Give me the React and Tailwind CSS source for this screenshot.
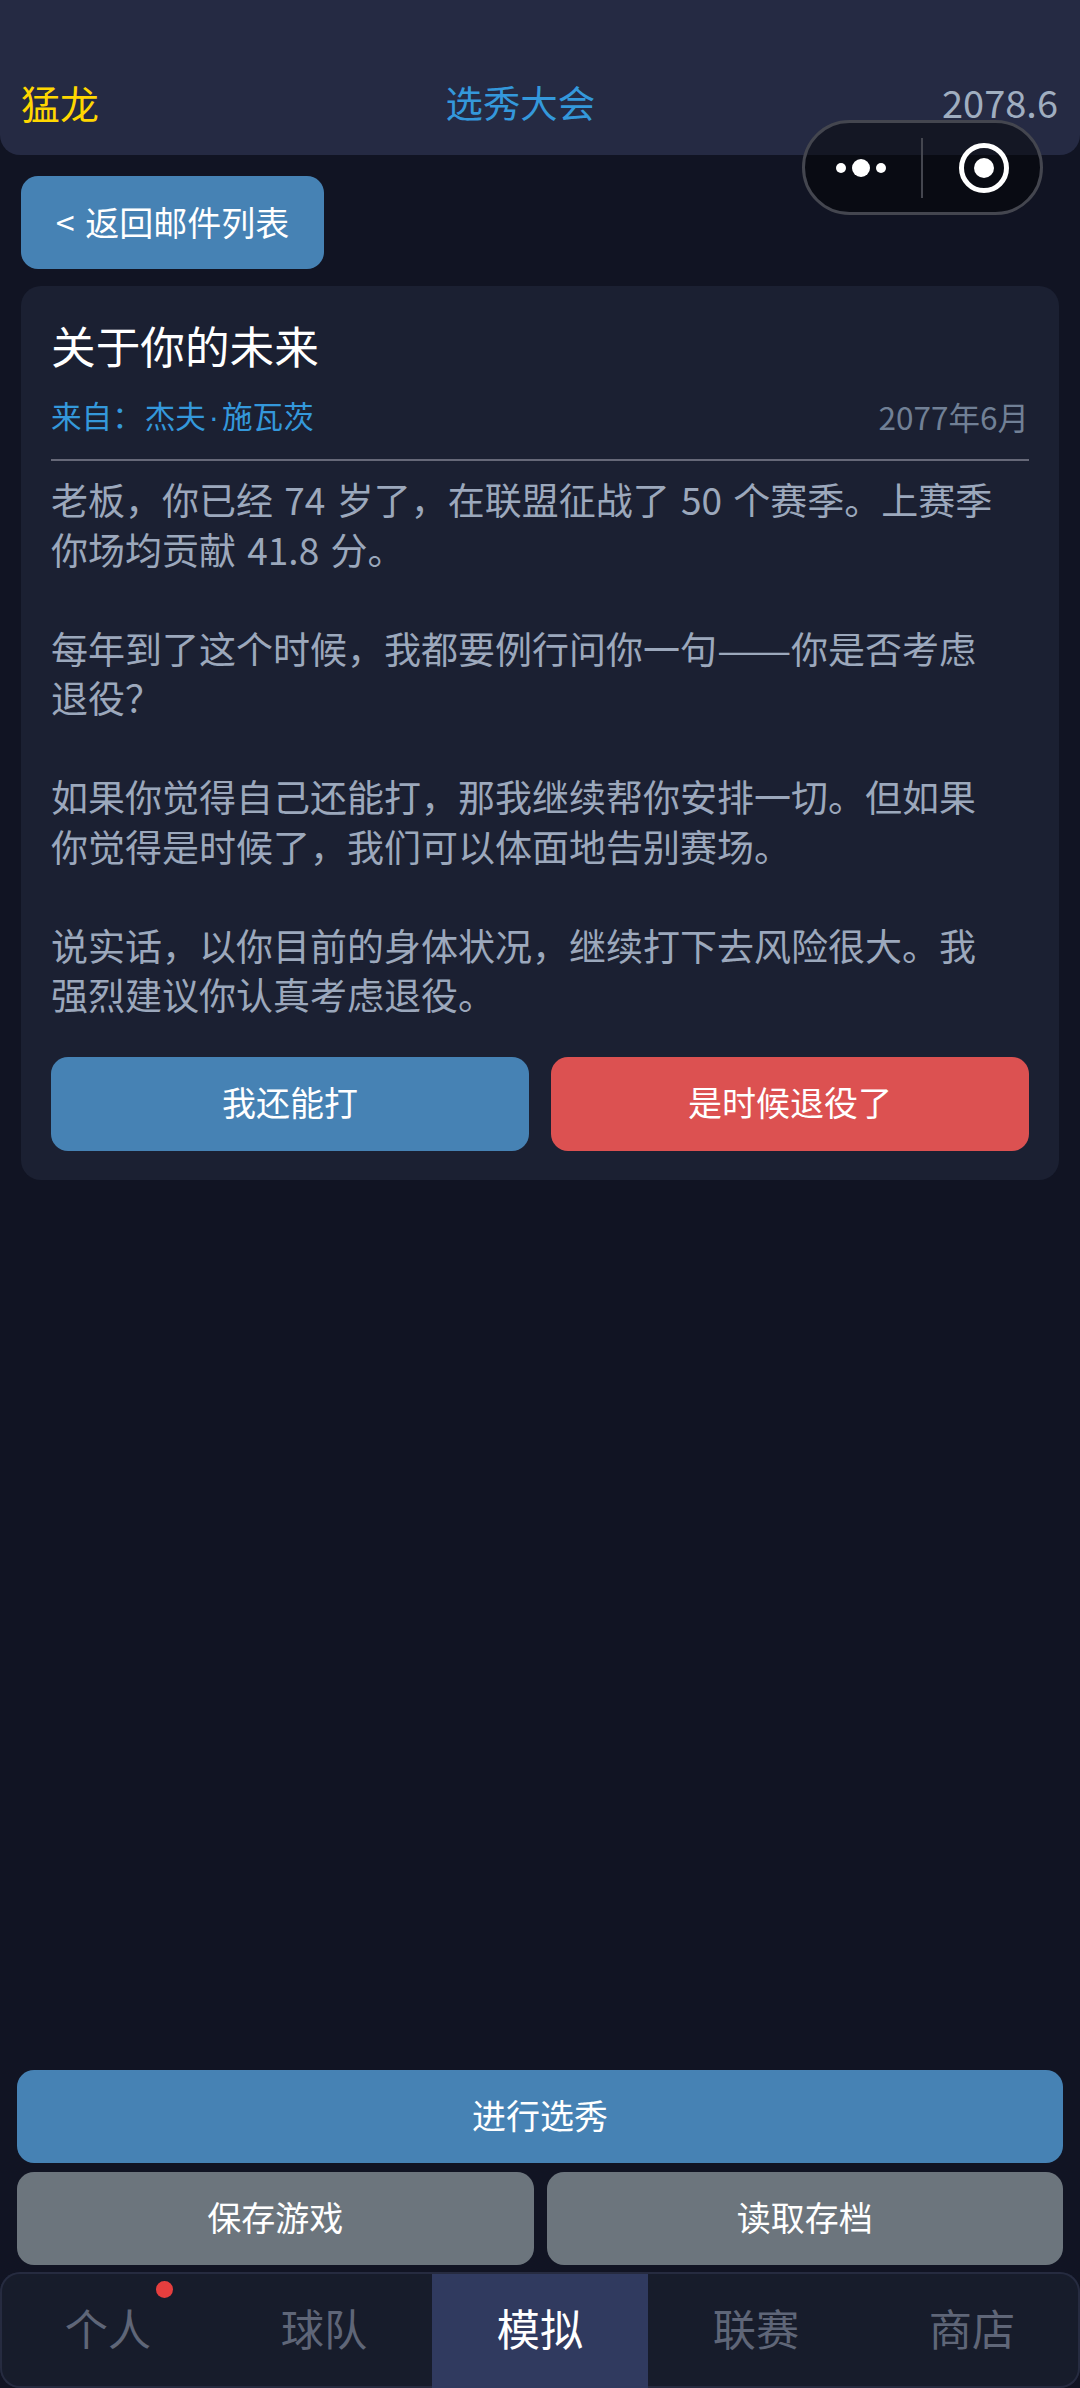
const font = { fontFamily: '"Noto Sans CJK SC", sans-serif' }

const paragraphs = [
  ['老板，你已经 74 岁了，在联盟征战了 50 个赛季。上赛季', '你场均贡献 41.8 分。'],
  ['每年到了这个时候，我都要例行问你一句——你是否考虑', '退役？'],
  ['如果你觉得自己还能打，那我继续帮你安排一切。但如果', '你觉得是时候了，我们可以体面地告别赛场。'],
  ['说实话，以你目前的身体状况，继续打下去风险很大。我', '强烈建议你认真考虑退役。'],
]

const tabs = ['个人', '球队', '模拟', '联赛', '商店']

const Capsule = () => (
  <div className="absolute left-[802px] top-[120px] flex h-[95px] w-[241px] items-center rounded-full border-[3px] border-[#44464f] bg-[rgba(0,0,0,0.45)]">
    <div className="flex w-[116px] items-center justify-center gap-[6px] pr-[4px]">
      <span className="h-[10px] w-[10px] rounded-full bg-white"></span>
      <span className="h-[18px] w-[18px] rounded-full bg-white"></span>
      <span className="h-[10px] w-[10px] rounded-full bg-white"></span>
    </div>
    <div className="h-[60px] w-[2px] bg-[#44464f]"></div>
    <div className="flex flex-1 items-center justify-center pl-[4px]">
      <div className="flex h-[50px] w-[50px] items-center justify-center rounded-full border-[5px] border-white">
        <span className="h-[20px] w-[20px] rounded-full bg-white"></span>
      </div>
    </div>
  </div>
)

// the em dashes come out narrow in Noto, so force the full-width form
const Line = ({ text }) => {
  const [before, after] = text.split('——')
  if (after === undefined) return <span className="block whitespace-nowrap [word-spacing:3px]">{text}</span>
  return (
    <span className="block whitespace-nowrap">
      {before}
      <span className="inline-block w-[74px] scale-x-[1.2] origin-left">——</span>
      {after}
    </span>
  )
}

export default function App() {
  return (
    <div className="relative flex h-screen flex-col bg-[#111423]" style={font}>
      <header className="flex h-[155px] items-end justify-between rounded-b-[20px] bg-[#252a43] pb-[28px] pl-[21px] pr-[22px]">
        <span className="text-[38.88px] leading-[50px] text-[#ffd700]">猛龙</span>
        <span className="text-[37.44px] leading-[50px] text-[#3498db]">选秀大会</span>
        <span className="text-[38px] leading-[50px] text-[#a0aec0]">2078.6</span>
      </header>

      <div className="flex flex-1 flex-col px-[21px]">
        <button className="mt-[21px] h-[93px] w-[303px] rounded-[17px] bg-[#4682b4] pb-[2px] text-[34px] text-white">&lt; <span className="ml-[3px]">返回邮件列表</span></button>

        <section className="mt-[17px] rounded-[20px] bg-[#1b2032] px-[30px] pb-[29px] pt-[22px]">
          <h1 className="text-[44.64px] leading-[74px] text-white">关于你的未来</h1>
          <div className="mt-[11px] flex items-center justify-between border-b-2 border-[#666878] pb-[19px] leading-[45px]">
            <span className="text-[30.6px] text-[#3498db]">来自：<span className="ml-[2px]">杰夫</span><span className="inline-block w-[16px] text-center font-['Liberation_Sans']">·</span>施瓦茨</span>
            <span className="text-[31.5px] text-[#718096]">2077年6月</span>
          </div>
          <div className="mt-[14px] text-[37px] leading-[49.5px] text-[#9ca8bc]">
            {paragraphs.map((lines, i) => (
              <p key={i} className={i > 0 ? 'mt-[49.5px]' : ''}>
                {lines.map((line) => (
                  <Line key={line} text={line} />
                ))}
              </p>
            ))}
          </div>
          <div className="mt-[37px] flex gap-[22px]">
            <button className="h-[94px] flex-1 rounded-[17px] bg-[#4682b4] pb-[5px] text-[34px] text-white">我还能打</button>
            <button className="h-[94px] flex-1 rounded-[17px] bg-[#dc5151] pb-[5px] text-[34px] text-white">是时候退役了</button>
          </div>
        </section>
      </div>

      <div className="flex flex-col gap-[9px] px-[17px] pb-[7px]">
        <button className="h-[93px] rounded-[17px] bg-[#4682b4] pb-[5px] text-[34px] text-white">进行选秀</button>
        <div className="flex gap-[13px]">
          <button className="h-[93px] flex-1 rounded-[17px] bg-[#6c757d] pb-[5px] text-[34px] text-white">保存游戏</button>
          <button className="h-[93px] flex-1 rounded-[17px] bg-[#6c757d] pb-[5px] text-[34px] text-white">读取存档</button>
        </div>
      </div>

      <nav className="flex h-[116px] overflow-hidden rounded-[20px] bg-[#171c2b] shadow-[inset_0_0_0_2px_#262b40]">
        {tabs.map((tab, i) => (
          <div key={tab} className={`relative mt-[2px] flex flex-1 items-center justify-center pb-[7px] text-[43.2px] ${i === 2 ? 'bg-[#303a5f] text-white' : 'text-[#5f6678]'}`}>
            {tab}
            {i === 0 && <span className="absolute right-[43px] top-[7px] h-[17px] w-[17px] rounded-full bg-[#e53e3e]"></span>}
          </div>
        ))}
      </nav>

      <Capsule />
    </div>
  )
}
